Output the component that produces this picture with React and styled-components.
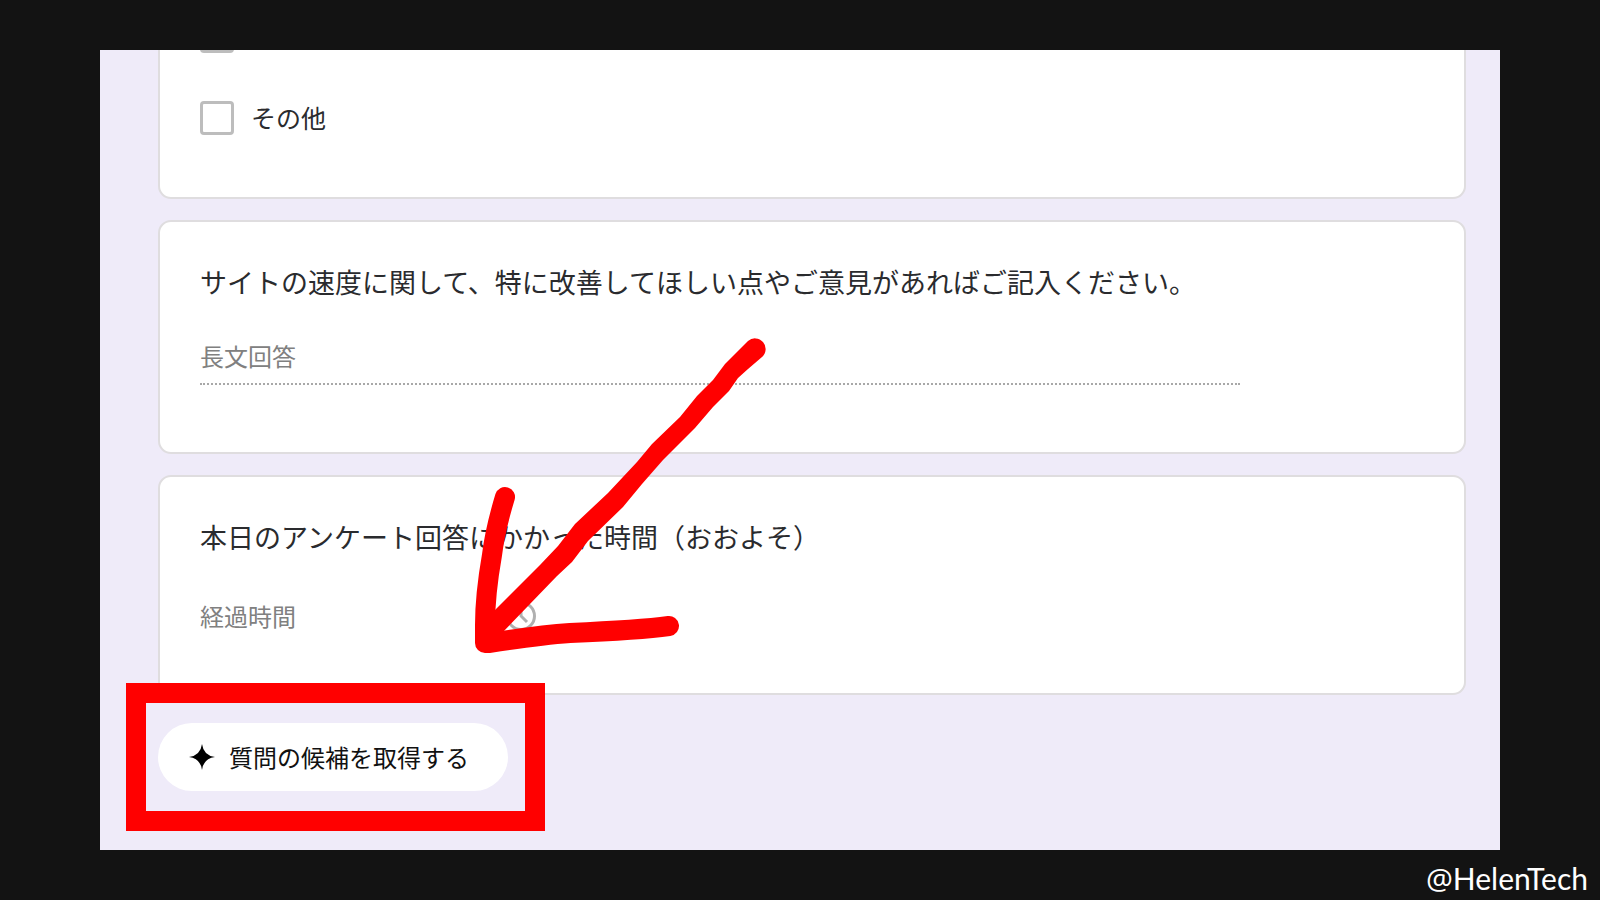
import styled, { createGlobalStyle } from 'styled-components';

const GlobalStyle = createGlobalStyle`
  * {
    box-sizing: border-box;
  }
  body {
    margin: 0;
    background: #131313;
    color: #2a2b2e;
    font-family: 'Noto Sans CJK JP', sans-serif;
  }
`;

const Page = styled.div`
  display: flex;
  flex-direction: column;
  min-height: 100vh;
  padding: 50px 100px 0;
`;

const Frame = styled.main`
  position: relative;
  flex: 1;
  overflow: hidden;
  padding: 0 34px 59px 58px;
  background: #efebf9;
`;

/* 上の設問は途中までスクロールされた状態 */
const Form = styled.form`
  display: flex;
  flex-direction: column;
  align-items: flex-start;
  gap: 21px;
  margin-top: -48px;
`;

const Card = styled.section`
  width: 100%;
  padding: ${({ $padding }) => $padding};
  border: 2px solid #dfdddf;
  border-radius: 13px;
  background: #fff;
`;

const Options = styled.div`
  display: flex;
  flex-direction: column;
  gap: 48px;
`;

const Option = styled.label`
  display: flex;
  align-items: center;
  gap: 17px;
  height: 34px;
  font-size: 25px;
  line-height: 32px;
`;

const OptionText = styled.span`
  padding-bottom: 2px;
`;

const Checkbox = styled.input`
  appearance: none;
  width: 34px;
  height: 34px;
  margin: 0;
  border: 3px solid #bdbdbd;
  border-radius: 4px;
  background: #fff;
`;

const Question = styled.label`
  display: block;
  margin-bottom: ${({ $gap }) => $gap};
  font-size: 27px;
  line-height: 36px;
`;

const AnswerInput = styled.input`
  display: block;
  width: ${({ $width }) => $width};
  height: 36px;
  padding: 0;
  border: 0;
  outline: 0;
  background: transparent;
  color: #70757a;
  font-family: inherit;
  font-size: 24px;
  line-height: 36px;
  &::placeholder {
    color: #808080;
    opacity: 1;
  }
`;

const LongAnswer = styled.div`
  width: 85%;
  padding-bottom: 9px;
  border-bottom: 2px dotted #a8a8a8;
`;

const TimeAnswer = styled.div`
  display: flex;
  align-items: center;
`;

const SuggestArea = styled.div`
  position: relative;
  margin-top: 7px;
`;

const SuggestButton = styled.button`
  display: flex;
  align-items: center;
  gap: 14px;
  height: 68px;
  padding: 0 39px 0 31px;
  border: 0;
  border-radius: 34px;
  background: #fff;
  color: #111;
  font-family: inherit;
  font-size: 24px;
  line-height: 36px;
`;

const Highlight = styled.div`
  position: absolute;
  inset: -40px -37px -40px -32px;
  border: 20px solid #f00;
  pointer-events: none;
`;

const Arrow = styled.svg`
  position: absolute;
  top: 279px;
  left: 365px;
  pointer-events: none;
`;

const Credit = styled.footer`
  height: 50px;
  margin-right: -88px;
  color: #fff;
  font-family: Lato, sans-serif;
  font-size: 30px;
  line-height: 56px;
  text-align: right;
`;

const AtMark = styled.span`
  font-family: 'Open Sans', sans-serif;
`;

const ClockIcon = () => (
  <svg width="36" height="36" viewBox="0 0 24 24" fill="none" stroke="#b0b0b0" strokeWidth="2" aria-hidden="true">
    <circle cx="12" cy="12" r="9" />
    <path d="M12 7v5l4 4" />
  </svg>
);

const SparkIcon = () => (
  <svg width="26" height="26" viewBox="0 0 26 26" aria-hidden="true">
    <path d="M13 0Q14.5 11.5 26 13Q14.5 14.5 13 26Q11.5 14.5 0 13Q11.5 11.5 13 0Z" fill="#000" />
  </svg>
);

const App = () => {
  return (
    <>
      <GlobalStyle />
      <Page>
        <Frame>
          <Form onSubmit={(e) => e.preventDefault()}>
            <Card $padding="15px 41px 62px 40px">
              <Options>
                <Option>
                  <Checkbox type="checkbox" aria-label="選択肢" />
                </Option>
                <Option>
                  <Checkbox type="checkbox" />
                  <OptionText>その他</OptionText>
                </Option>
              </Options>
            </Card>

            <Card $padding="42px 41px 67px 40px">
              <Question htmlFor="opinion" $gap="38px">
                サイトの速度に関して、特に改善してほしい点やご意見があればご記入ください。
              </Question>
              <LongAnswer>
                <AnswerInput id="opinion" type="text" placeholder="長文回答" $width="100%" />
              </LongAnswer>
            </Card>

            <Card $padding="42px 41px 59px 40px">
              <Question htmlFor="duration" $gap="43px">
                本日のアンケート回答にかかった時間（おおよそ）
              </Question>
              <TimeAnswer>
                <AnswerInput id="duration" type="text" placeholder="経過時間" $width="303px" />
                <ClockIcon />
              </TimeAnswer>
            </Card>

            <SuggestArea>
              <SuggestButton type="button">
                <SparkIcon />
                質問の候補を取得する
              </SuggestButton>
              <Highlight />
            </SuggestArea>
          </Form>

          {/* 手書きの矢印 */}
          <Arrow width="312" height="334" viewBox="465 329 312 334" aria-hidden="true">
            <path
              d="M748 341A10 10 0 1 1 762 357L748 369L738 378L729 391L713 407L695 428L663 460L642 484L623 507L588 541L572 562L557 576L503 632L485 640L494 611L540 565L558 546L575 524L608 493L637 462L652 444L680 417L697 396L713 380L725 364Z"
              fill="#f00"
            />
            <path
              d="M505 497Q495 530 492 555Q485 595 485 625V643H490Q540 635 570 633Q640 630 669 626"
              fill="none"
              stroke="#f00"
              strokeWidth="20"
              strokeLinecap="round"
              strokeLinejoin="round"
            />
          </Arrow>
        </Frame>
        <Credit>
          <AtMark>@</AtMark>HelenTech
        </Credit>
      </Page>
    </>
  );
};

export default App;
